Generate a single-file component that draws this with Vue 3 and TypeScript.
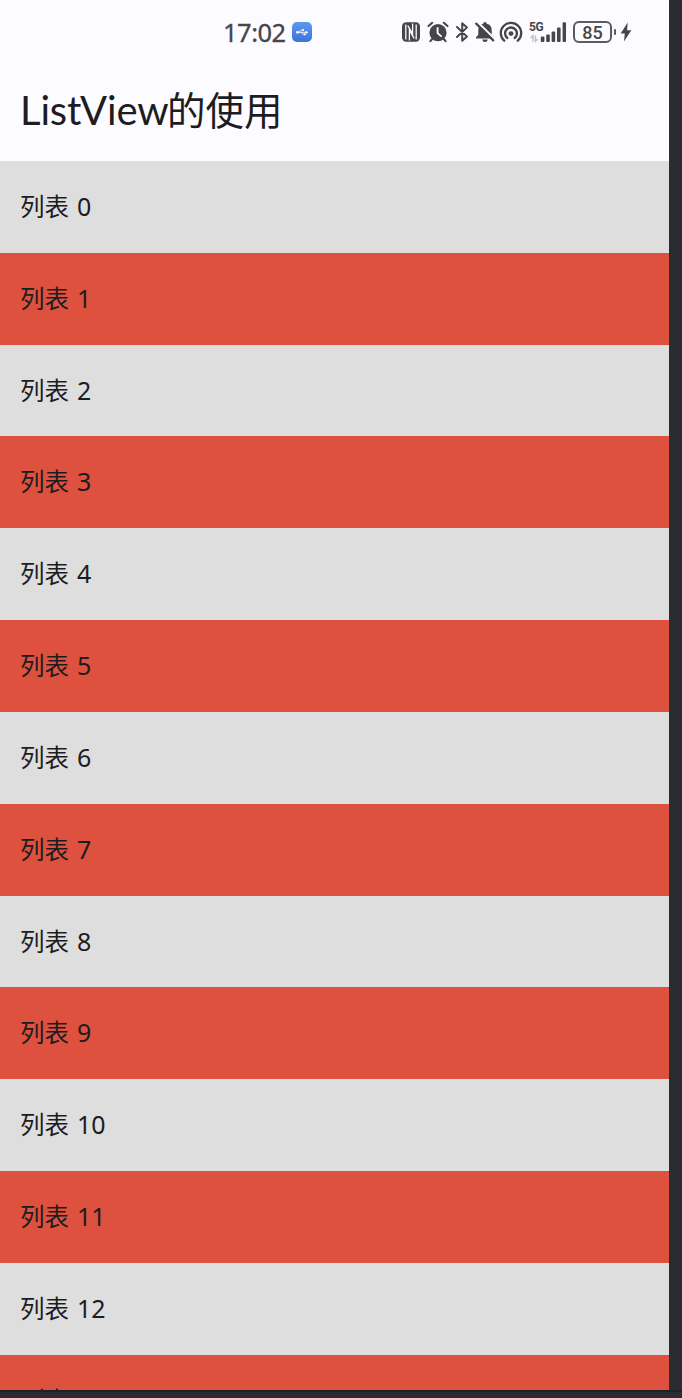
<script setup lang="ts">
interface Row {
  label: string
  index: number
  accent: boolean
}

const rows: Row[] = Array.from({ length: 14 }, (_, index) => ({
  label: '列表',
  index,
  accent: index % 2 === 1,
}))
</script>

<template>
  <div class="window">
    <main class="screen">
      <header class="status">
        <span class="clock">17:02</span>
        <svg class="usb" width="20" height="20" viewBox="0 0 20 20">
          <defs>
            <linearGradient id="usbFill" x1="0" y1="0" x2="0" y2="1">
              <stop offset="0" stop-color="#5c98ef" />
              <stop offset="1" stop-color="#3d73dc" />
            </linearGradient>
          </defs>
          <rect width="20" height="20" rx="5" fill="url(#usbFill)" />
          <g fill="none" stroke="#edf3fd" stroke-width="1">
            <path d="M5 10.3h10M7.2 10.3l2-2.3h2M9 10.3l1.8 2h2" />
          </g>
          <g fill="#fff">
            <circle cx="5.5" cy="10.3" r="1.4" />
            <circle cx="11.2" cy="8" r="1" />
            <rect x="12" y="11.4" width="1.8" height="1.8" />
            <path d="M13.8 8.7l2.5 1.6-2.5 1.6z" />
          </g>
        </svg>

        <svg class="nfc" width="18" height="20" viewBox="0 0 18 20">
          <rect width="18" height="19.6" y=".2" rx="4.2" fill="#464648" />
          <g fill="none" stroke="#fcfbff" stroke-width="1.3">
            <path d="M3.8 2.4v15.2M14.2 2.4v15.2" />
            <path d="M7.4 18.4V8.2l4.8 8.2M10.6 1.6v10.2L5.8 3.6" />
          </g>
        </svg>

        <svg class="alarm" width="22" height="22" viewBox="0 0 22 22">
          <circle cx="11" cy="11.7" r="8.6" fill="#464648" />
          <path d="M1.5 5L5.2 1.8M16.8 1.8L20.5 5M5.2 18l-1.8 2.1M16.8 18l1.8 2.1" fill="none" stroke="#464648" stroke-width="2.1" stroke-linecap="round" />
          <path d="M10.6 6.9v5.2l3.4 3" fill="none" stroke="#fcfbff" stroke-width="1.9" stroke-linecap="round" />
        </svg>

        <svg class="bluetooth" width="14" height="22" viewBox="0 0 14 22">
          <path d="M2 6l10 9.6-4.8 4.2V2.2L12 6.4 2 16" fill="none" stroke="#464648" stroke-width="2" stroke-linejoin="round" stroke-linecap="round" />
        </svg>

        <svg class="bell" width="20" height="22" viewBox="0 0 20 22">
          <path d="M1 17.4v-1.2l2.3-2.5V9.2Q3.3 3.8 8.2 2.7 8.4 1 10 1t1.8 1.7q4.9 1.1 4.9 6.5v4.5l2.3 2.5v1.2zM7.2 18.4h5.6q-.5 2.6-2.8 2.6t-2.8-2.6z" fill="#464648" />
          <path d="M1.6.2L21 19.2" stroke="#fcfbff" stroke-width="2.2" />
          <path d="M1.2 2.6l17 16.8" stroke="#464648" stroke-width="2.2" stroke-linecap="round" />
        </svg>

        <svg class="hotspot" width="24" height="22" viewBox="0 0 24 22">
          <circle cx="12" cy="12.6" r="2.4" fill="#464648" />
          <g fill="none" stroke="#464648" stroke-width="2.3" stroke-linecap="round">
            <path d="M5.2 19.7a10.2 10.2 0 1 1 13.6 0" />
            <path d="M8.3 17a5.9 5.9 0 1 1 7.4 0" />
          </g>
        </svg>

        <span class="network">
          <span class="generation">5G</span>
          <svg class="signal" width="38" height="22" viewBox="0 0 38 22">
            <g fill="#464648">
              <rect x="11.8" y="15.6" width="3.6" height="5.4" rx="1" />
              <rect x="17.2" y="13.5" width="3.6" height="7.5" rx="1" />
              <rect x="22.6" y="10.4" width="3.6" height="10.6" rx="1" />
              <rect x="28" y="6.5" width="3.6" height="14.5" rx="1" />
              <rect x="33.6" y="1.2" width="3.4" height="19.8" rx="1" />
            </g>
            <path d="M3.9 20.4v-5.8l-2.3 2.4M6.4 14.6v5.8L8.7 18" fill="none" stroke="#c0bfc3" stroke-width="1.5" />
          </svg>
        </span>

        <span class="battery">85</span>
        <i class="terminal"></i>
        <svg class="bolt" width="12" height="20" viewBox="0 0 12 20">
          <path d="M7.7.5L.7 11.4h4.1L4 19.5l7.3-11.3H7.1z" fill="#464648" />
        </svg>
      </header>

      <h1 class="title"><span class="latin">ListView</span><span class="han">的使用</span></h1>

      <ul class="list">
        <li v-for="row in rows" :key="row.index" class="row" :class="{ accent: row.accent }">
          <span class="label">{{ row.label }}</span><span class="number">{{ row.index }}</span>
        </li>
      </ul>
    </main>
  </div>
</template>

<style>
body {
  background: #2b2c30;
}
</style>

<style scoped>
.window {
  box-sizing: border-box;
  width: 682px;
  height: 1398px;
  overflow: hidden;
  background: linear-gradient(#202124, #202124) 0 1390px / 100% 2px no-repeat, #2b2c30;
}
.screen {
  width: 669px;
  height: 1390px;
  overflow: hidden;
  background: #fcfbff;
  color: #1d1c1f;
}
.status {
  display: flex;
  align-items: center;
  box-sizing: border-box;
  height: 64px;
  padding-left: 223px;
  color: #464648;
}
.status svg {
  display: block;
  flex: none;
}
.clock {
  width: 63px;
  margin-right: 6px;
  font: 400 25.5px/32px "Noto Sans", sans-serif;
  letter-spacing: -0.5px;
  -webkit-text-stroke: 0.3px #464648;
  white-space: nowrap;
}
.nfc {
  margin-left: 90px;
}
.alarm {
  margin-left: 7px;
}
.bluetooth {
  margin-left: 6px;
}
.bell {
  margin-left: 6px;
}
.hotspot {
  margin-left: 4px;
}
.network {
  display: grid;
  width: 38px;
  height: 22px;
  margin-left: 6px;
}
.generation,
.signal {
  grid-area: 1 / 1;
}
.generation {
  font: 700 12px/13px Roboto, sans-serif;
  letter-spacing: -0.3px;
}
.battery {
  box-sizing: border-box;
  width: 39px;
  height: 22px;
  margin-left: 6px;
  border: 2px solid #5b5b5d;
  border-radius: 6px;
  font: 500 18px/20px Roboto, sans-serif;
  text-align: center;
}
.terminal {
  width: 2px;
  height: 6px;
  margin-left: 2px;
  border-radius: 1px;
  background: #59595b;
}
.bolt {
  margin-left: 4px;
}
.title {
  display: flex;
  align-items: baseline;
  box-sizing: border-box;
  height: 97px;
  margin: 0;
  padding: 14px 0 0 20px;
  font-weight: 400;
  line-height: 60px;
  white-space: nowrap;
}
.latin {
  width: 147px;
  font-family: Lato, sans-serif;
  font-size: 40px;
  letter-spacing: -0.15px;
}
.han {
  font-family: "Noto Sans CJK SC", sans-serif;
  font-size: 38.5px;
}
.list {
  margin: 0;
  padding: 0;
  list-style: none;
}
.row {
  display: flex;
  align-items: baseline;
  box-sizing: border-box;
  height: 91.83px;
  padding: 25px 0 0 20px;
  background: #dedede;
  line-height: 40px;
}
.accent {
  background: #dd513e;
}
.label {
  width: 57px;
  font-family: "Noto Sans CJK SC", sans-serif;
  font-size: 24.5px;
}
.number {
  font-family: "Noto Sans", sans-serif;
  font-size: 25px;
}
</style>
